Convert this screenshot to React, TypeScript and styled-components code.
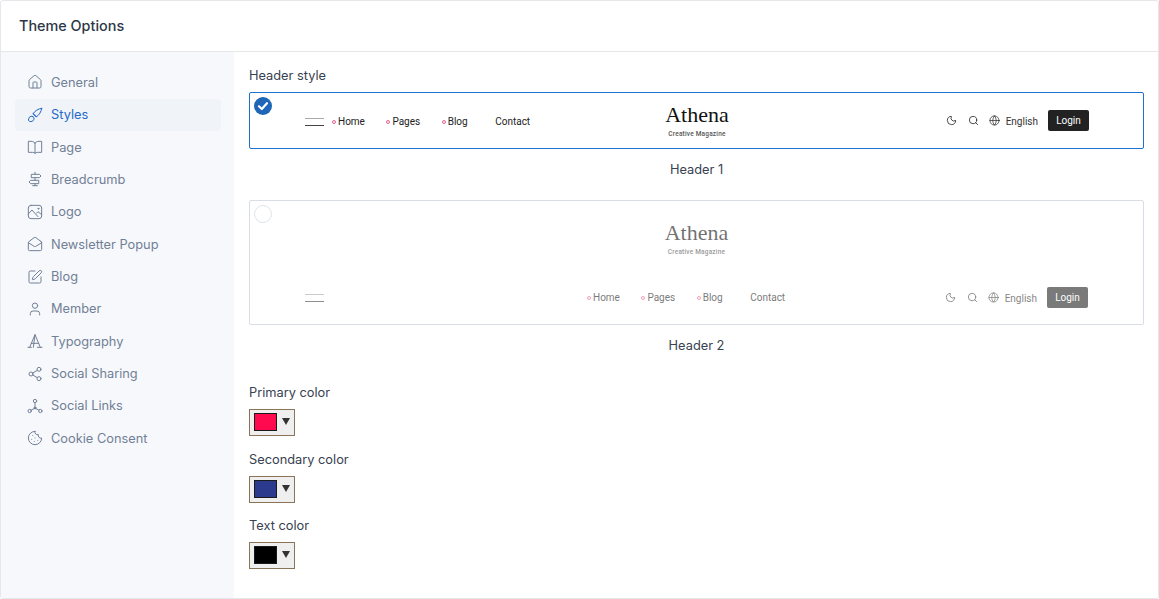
import React from 'react';
import styled, { createGlobalStyle } from 'styled-components';
import {
  House,
  MailOpen,
  SquarePen,
  User,
  Share2,
  Cookie,
  Moon,
  Search,
  Globe,
} from 'lucide-react';

const GlobalStyle = createGlobalStyle`
  * { box-sizing: border-box; }
  html, body { margin: 0; padding: 0; background: #fff; }
  body { font-family: Inter, "Liberation Sans", sans-serif; }
`;

type IconProps = { size?: number; strokeWidth?: number; children?: React.ReactNode };

function Glyph({ size, strokeWidth, children }: IconProps) {
  return (
    <svg width={size} height={size} viewBox="0 0 24 24" fill="none" stroke="currentColor" strokeWidth={strokeWidth} strokeLinecap="round" strokeLinejoin="round">
      {children}
    </svg>
  );
}

const BrushIcon = (p: IconProps) => (
  <Glyph {...p}>
    <path d="M22 2c-5 .6-10 3.6-13 8.2l4.8 4.8C18.400 12 21.400 7 22 2Z" />
    <path d="M9.500 9.800 14.200 14.500" />
    <path d="M9 14.500a4.200 4.200 0 0 0-5.600 1c-.8 1.200-.6 2.600-1.400 4 .4 1.600 2 2.500 4 2.300 2.600-.2 4.400-1.900 4.500-4.200.1-1.200-.4-2.300-1.500-3.100Z" />
  </Glyph>
);

const BookIcon = (p: IconProps) => (
  <Glyph {...p}>
    <path d="M12 6c-1.500-1.500-3.500-2.500-6-2.500H2v16.500h6c1.800 0 3.200.5 4 1.500.8-1 2.200-1.500 4-1.500h6V3.500h-4C15.500 3.500 13.500 4.500 12 6Z" />
    <path d="M12 6v15.500" />
  </Glyph>
);

const SignpostIcon = (p: IconProps) => (
  <Glyph {...p}>
    <path d="M12 2v3M12 10v4M12 19v3M8.500 22h7" />
    <path d="M7 5h11.500l2.500 2.500-2.500 2.500H7Z" />
    <path d="M17 14H5.500L3 16.500 5.500 19H17Z" />
  </Glyph>
);

const PictureIcon = (p: IconProps) => (
  <Glyph {...p}>
    <rect x="2" y="2" width="20" height="20" rx="4" />
    <path d="m2 15 5.500-6c2.500 3 6 7 9 10M14 14l2.500-2.500L22 16" />
    <circle cx="17" cy="7" r="0.800" />
  </Glyph>
);

const TypeIcon = (p: IconProps) => (
  <Glyph {...p}>
    <path d="M1.500 21.500h5M15.500 21.500h7M4 21.500 12 2.500l8 19" />
    <path d="M12 2.500 9.500 21.500M6.500 15.500h11" />
  </Glyph>
);

const LinksIcon = (p: IconProps) => (
  <Glyph {...p}>
    <circle cx="12" cy="4.500" r="2.500" />
    <circle cx="4" cy="19.500" r="2.500" />
    <circle cx="20" cy="19.500" r="2.500" />
    <circle cx="12" cy="15" r="1.500" fill="currentColor" />
    <path d="M12 7v7M6.200 18.300 12 15l5.800 3.300" />
  </Glyph>
);

const menu = [
  { label: 'General', icon: House },
  { label: 'Styles', icon: BrushIcon, active: true },
  { label: 'Page', icon: BookIcon },
  { label: 'Breadcrumb', icon: SignpostIcon },
  { label: 'Logo', icon: PictureIcon },
  { label: 'Newsletter Popup', icon: MailOpen },
  { label: 'Blog', icon: SquarePen },
  { label: 'Member', icon: User },
  { label: 'Typography', icon: TypeIcon },
  { label: 'Social Sharing', icon: Share2 },
  { label: 'Social Links', icon: LinksIcon },
  { label: 'Cookie Consent', icon: Cookie },
];

const navItems = ['Home', 'Pages', 'Blog', 'Contact'];

const colorFields = [
  { label: 'Primary color', value: '#ff0a4e' },
  { label: 'Secondary color', value: '#2b3a8c' },
  { label: 'Text color', value: '#000000' },
];

function Nav() {
  return (
    <NavList>
      {navItems.map((item) => (
        <NavItem key={item}>
          <Dot $hidden={item === 'Contact'} />
          {item}
        </NavItem>
      ))}
    </NavList>
  );
}

function Tools() {
  return (
    <ToolGroup>
      <Moon size={11} strokeWidth={1.75} />
      <Search size={11} strokeWidth={1.75} />
      <Globe size={11} strokeWidth={1.5} />
      <Lang>English</Lang>
      <LoginButton>Login</LoginButton>
    </ToolGroup>
  );
}

function Logo() {
  return (
    <LogoBlock>
      <LogoName>Athena</LogoName>
      <LogoTag>Creative Magazine</LogoTag>
    </LogoBlock>
  );
}

function App() {
  return (
    <Page>
      <GlobalStyle />
      <TitleBar>Theme Options</TitleBar>
      <Body>
        <Sidebar>
          {menu.map(({ label, icon: Icon, active }) => (
            <MenuItem key={label} $active={active}>
              <Icon size={16} strokeWidth={1.5} />
              {label}
            </MenuItem>
          ))}
        </Sidebar>
        <Content>
          <Label>Header style</Label>
          <PreviewCard $selected>
            <CheckMark $selected>
              <svg width="12" height="12" viewBox="0 0 12 12" fill="none" stroke="#fff" strokeWidth="2.2" strokeLinecap="round" strokeLinejoin="round">
                <path d="M2 6.300 4.800 9 10 3.200" />
              </svg>
            </CheckMark>
            <HeaderOne>
              <LeftGroup>
                <Burger />
                <Nav />
              </LeftGroup>
              <Logo />
              <Tools />
            </HeaderOne>
          </PreviewCard>
          <Caption>Header 1</Caption>
          <PreviewCard>
            <CheckMark />
            <HeaderTwo>
              <Logo />
              <BottomRow>
                <Burger />
                <Nav />
                <Tools />
              </BottomRow>
            </HeaderTwo>
          </PreviewCard>
          <Caption>Header 2</Caption>
          <ColorGroup>
            {colorFields.map((field) => (
              <div key={field.label}>
                <Label>{field.label}</Label>
                <ColorBox>
                  <ColorInput type="color" defaultValue={field.value} />
                  <Arrow />
                </ColorBox>
              </div>
            ))}
          </ColorGroup>
        </Content>
      </Body>
    </Page>
  );
}

const Page = styled.div`
  width: 1159px;
  height: 599px;
  border: 1px solid #e5e7eb;
  border-radius: 3px;
  display: flex;
  flex-direction: column;
  overflow: hidden;
`;

const TitleBar = styled.div`
  height: 51px;
  flex: none;
  padding: 0 18px 2px;
  display: flex;
  align-items: center;
  font-size: 14.4px;
  font-weight: 500;
  color: #2d3748;
  border-bottom: 1px solid #e5e7eb;
`;

const Body = styled.div`
  flex: 1;
  display: flex;
  min-height: 0;
`;

const Sidebar = styled.div`
  width: 233px;
  flex: none;
  background: #f7f8fc;
  padding: 14.400px 13px 0 14px;
  display: flex;
  flex-direction: column;
  gap: 0.360px;
`;

const MenuItem = styled.div<{ $active?: boolean }>`
  height: 32px;
  flex: none;
  padding: 0 12px;
  display: flex;
  align-items: center;
  gap: 8px;
  font-size: 12.8px;
  border-radius: 4px;
  color: ${(p) => (p.$active ? '#2468c8' : '#718096')};
  background: ${(p) => (p.$active ? '#f0f3f8' : 'transparent')};
  svg { flex: none; }
`;

const Content = styled.div`
  flex: 1;
  min-width: 0;
  padding: 14px 14px 0 15px;
`;

const Label = styled.div`
  font-size: 12.8px;
  line-height: 20px;
  color: #374151;
  margin-bottom: 6px;
`;

const PreviewCard = styled.div<{ $selected?: boolean }>`
  position: relative;
  border: 1px solid ${(p) => (p.$selected ? '#1d6fd1' : '#d9dde6')};
  border-radius: 2px;
  background: #fff;
`;

const CheckMark = styled.div<{ $selected?: boolean }>`
  position: absolute;
  left: 4px;
  top: 4px;
  width: 18px;
  height: 18px;
  border-radius: 50%;
  display: flex;
  align-items: center;
  justify-content: center;
  background: ${(p) => (p.$selected ? '#1f66b8' : '#fff')};
  border: ${(p) => (p.$selected ? 'none' : '1px solid #dfe3ea')};
`;

const HeaderOne = styled.div`
  height: 55px;
  padding: 0 54px 0 55px;
  display: grid;
  grid-template-columns: 1fr auto 1fr;
  align-items: center;
  font-family: Roboto, "Liberation Sans", sans-serif;
  color: #222;
`;

const HeaderTwo = styled.div`
  height: 123px;
  padding: 20px 55px 0;
  display: flex;
  flex-direction: column;
  align-items: center;
  font-family: Roboto, "Liberation Sans", sans-serif;
  color: #222;
  opacity: 0.6;
`;

const LeftGroup = styled.div`
  display: flex;
  align-items: center;
  gap: 8px;
  padding-top: 2px;
`;

const BottomRow = styled.div`
  align-self: stretch;
  margin-top: 31px;
  display: grid;
  grid-template-columns: 282px auto 1fr;
  align-items: center;
`;

const Burger = styled.span`
  display: block;
  width: 19px;
  height: 8px;
  border-top: 1px solid #aaa;
  border-bottom: 1px solid #444;
`;

const NavList = styled.div`
  display: flex;
  align-items: center;
  gap: 21.500px;
  padding-top: 1px;
`;

const NavItem = styled.div`
  display: flex;
  align-items: center;
  font-size: 10px;
  line-height: 12px;
`;

const Dot = styled.span<{ $hidden?: boolean }>`
  width: 4px;
  height: 4px;
  margin-right: 2px;
  border-radius: 50%;
  border: 1px solid #ec5f8c;
  visibility: ${(p) => (p.$hidden ? 'hidden' : 'visible')};
`;

const LogoBlock = styled.div`
  display: flex;
  flex-direction: column;
  align-items: center;
`;

const LogoName = styled.div`
  font-family: "Liberation Serif", serif;
  font-size: 22px;
  line-height: 24px;
  color: #111;
`;

const LogoTag = styled.div`
  font-size: 6.500px;
  line-height: 8px;
  margin-top: 3px;
  letter-spacing: 0.2px;
  color: #555;
  font-weight: 500;
`;

const ToolGroup = styled.div`
  display: flex;
  align-items: center;
  justify-content: flex-end;
  gap: 10px;
  svg:first-child { margin-right: 1px; }
`;

const Lang = styled.span`
  font-size: 10px;
  margin: 1px 0 0 -4px;
  color: #333;
`;

const LoginButton = styled.span`
  width: 41px;
  height: 21px;
  display: flex;
  align-items: center;
  justify-content: center;
  font-size: 10px;
  color: #fff;
  background: #222;
  border-radius: 2px;
`;

const Caption = styled.div`
  text-align: center;
  font-size: 12.8px;
  line-height: 20px;
  color: #374151;
  margin: 11px 0 20px;
`;

const ColorGroup = styled.div`
  margin-top: 27px;
  display: flex;
  flex-direction: column;
  gap: 13.500px;
`;

const ColorBox = styled.div`
  width: 46px;
  height: 27px;
  padding: 3px 0 0 4px;
  display: flex;
  align-items: flex-start;
  gap: 5px;
  border: 1px solid #8b7355;
  background: #efefef;
`;

const ColorInput = styled.input`
  appearance: none;
  width: 23px;
  height: 18px;
  padding: 0;
  border: none;
  background: none;
  &::-webkit-color-swatch-wrapper { padding: 0; }
  &::-webkit-color-swatch { border: 1px solid #1a1a1a; border-radius: 0; }
`;

const Arrow = styled.span`
  margin-top: 5px;
  width: 0;
  height: 0;
  border-left: 4.500px solid transparent;
  border-right: 4.500px solid transparent;
  border-top: 7px solid #333;
`;

export default App;
